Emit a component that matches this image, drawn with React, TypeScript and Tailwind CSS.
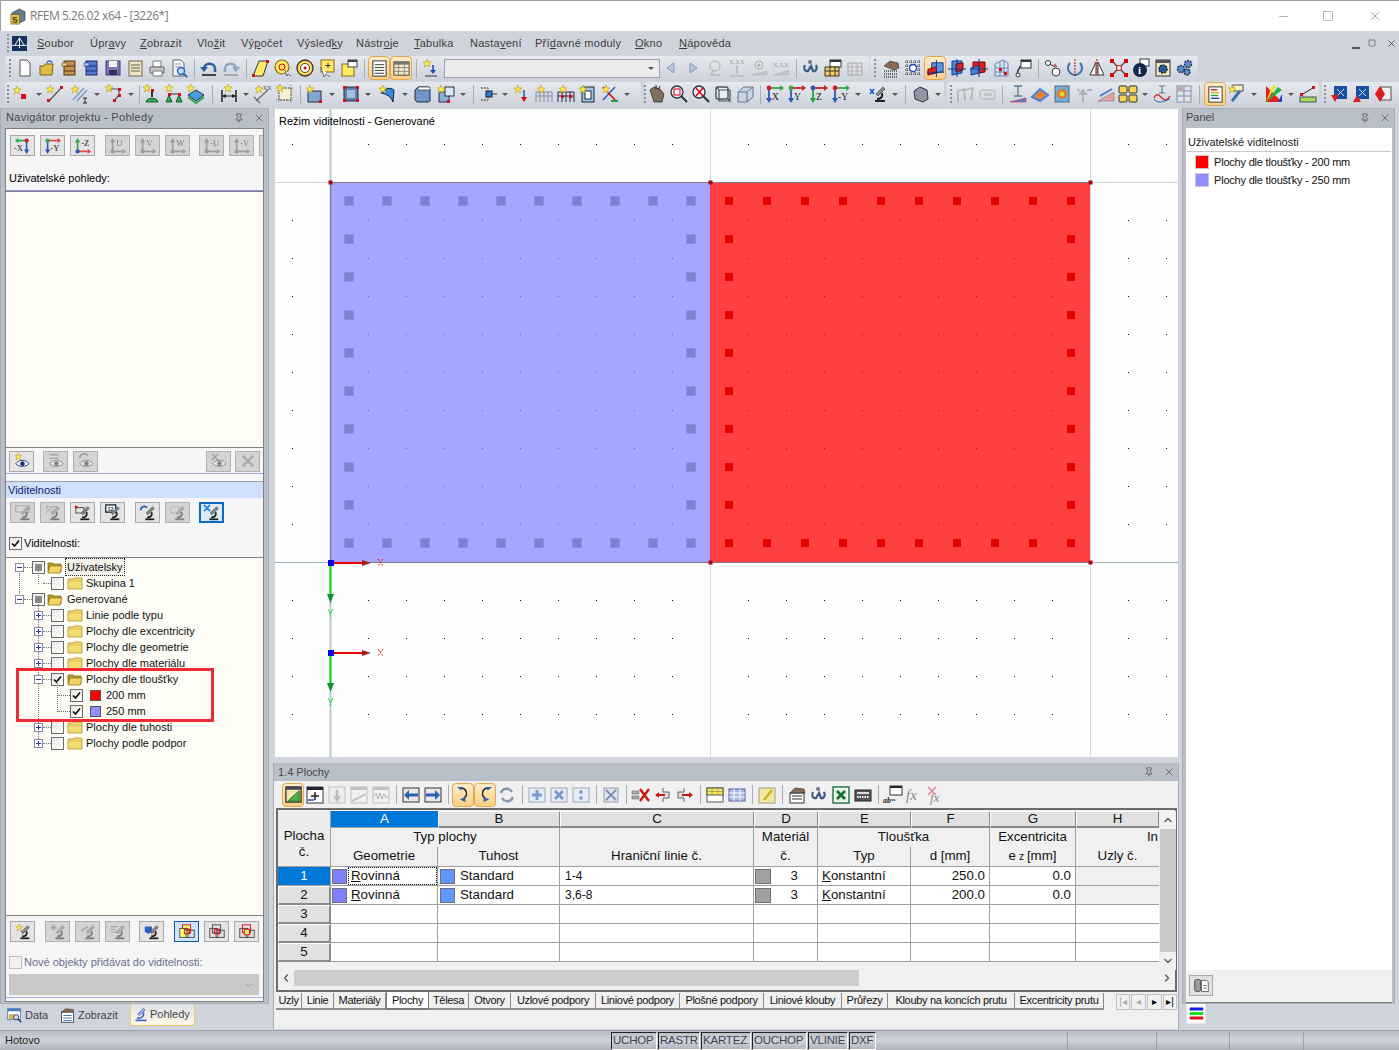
import type { ReactNode } from 'react';
import { ChevronDown, ChevronLeft, ChevronRight, ChevronUp, Minus, Pin, Square, X } from 'lucide-react';

const Nd = ({ x, y }: { x: number; y: number }) => <rect x={x} y={y} width="3" height="3" fill="#d4101c" />;
const Star = ({ x = 4, y = 4 }: { x?: number; y?: number }) => (
  <path transform={`translate(${x} ${y})`} d="M0-4 1-1.2 4-1 1.6.8 2.6 4 0 2.2-2.6 4-1.6.8-4-1-1-1.2z" fill="#ffe94a" stroke="#a8900f" strokeWidth=".5" />
);
const Scope = () => (
  <>
    <path d="M7 16h10v2H7z" fill="#222" />
    <path d="M9 15c4 0 6-2 5-6" fill="none" stroke="#222" strokeWidth="2" />
    <path d="M8 10l7-7 2 2-7 7z" fill="#8b8b8b" stroke="#333" strokeWidth=".6" />
  </>
);
const Eye = () => (
  <>
    <path d="M3 13c4-5 11-5 15 0-4 4-11 4-15 0z" fill="#fff" stroke="#23307c" />
    <circle cx="10.5" cy="13" r="2.6" fill="#23307c" />
  </>
);
// axis cross: h arrow along the top (or bottom), v arrow down (or up), dot at the corner
const AxesL = ({ label, h, v, dot }: { label: string; h: string; v: string; dot: string }) => (
  <>
    <path d="M14 4H3" stroke={h} strokeWidth="1.8" />
    <path d="M1 4l4-3v6z" fill={h} />
    <path d="M14 4v11" stroke={v} strokeWidth="1.8" />
    <path d="M14 19l-3-5h6z" fill={v} />
    <circle cx="14" cy="4" r="2.4" fill={dot} />
    <text x="0" y="16" fontSize="9.5" fontFamily="Liberation Serif" fill="#222">{label}</text>
  </>
);
const AxesR = ({ label, h, v, dot }: { label: string; h: string; v: string; dot: string }) => (
  <>
    <path d="M4 4h11" stroke={h} strokeWidth="1.8" />
    <path d="M19 4l-4-3v6z" fill={h} />
    <path d="M4 4v11" stroke={v} strokeWidth="1.8" />
    <path d="M4 19l-3-5h6z" fill={v} />
    <circle cx="4" cy="4" r="2.4" fill={dot} />
    <text x="7" y="16" fontSize="9.5" fontFamily="Liberation Serif" fill="#222">{label}</text>
  </>
);
const AxesU = ({ label, h, v, dot }: { label?: string; h: string; v: string; dot: string }) => (
  <>
    <path d="M4 16h11" stroke={h} strokeWidth="1.8" />
    <path d="M19 16l-4-3v6z" fill={h} />
    <path d="M4 16V5" stroke={v} strokeWidth="1.8" />
    <path d="M4 1L1 6h6z" fill={v} />
    <circle cx="4" cy="16" r="2.4" fill={dot} />
    {label && <text x="8" y="10" fontSize="9.5" fontFamily="Liberation Serif" fill="#222">{label}</text>}
  </>
);
const Layers = ({ fill, inner }: { fill: string; inner: string }) => (
  <>
    <rect x="5" y="2" width="9" height="9" fill={fill} stroke={inner} />
    <rect x="2" y="6" width="9" height="10" fill={fill === 'none' ? 'none' : '#ffff70'} stroke="#444" />
    <rect x="9" y="8" width="9" height="8" fill="none" stroke="#444" />
    <rect x="7" y="7" width="6" height="5" fill="none" stroke="#e00010" />
  </>
);

const I: Record<string, ReactNode> = {
  new: <path d="M5 2h7l3 3v13H5z" fill="#fff" stroke="#555" />,
  open: (
    <>
      <path d="M3 8h4l1-2h8l-1 11H3z" fill="#e2bb46" stroke="#7b6320" />
      <path d="M10 5c1-3 4-3 5 0" stroke="#2f6fd0" fill="none" strokeWidth="1.5" />
    </>
  ),
  cabO: (
    <>
      <rect x="5" y="3" width="11" height="14" fill="#c4914a" stroke="#4f361a" />
      <path d="M5 8h11M5 13h11" stroke="#4f361a" />
      <rect x="3" y="5" width="5" height="3" fill="#f0d090" stroke="#4f361a" strokeWidth=".5" />
    </>
  ),
  cabB: (
    <>
      <rect x="5" y="3" width="11" height="14" fill="#4f78cf" stroke="#1c2f70" />
      <path d="M5 8h11M5 13h11" stroke="#1c2f70" />
      <rect x="3" y="5" width="5" height="3" fill="#b0c8f0" stroke="#1c2f70" strokeWidth=".5" />
    </>
  ),
  save: (
    <>
      <rect x="3" y="3" width="14" height="14" fill="#7d78b4" stroke="#3b3870" />
      <rect x="6" y="3" width="8" height="6" fill="#f0f0f0" />
      <rect x="6" y="12" width="8" height="5" fill="#30305a" />
    </>
  ),
  memo: (
    <>
      <rect x="4" y="3" width="13" height="15" fill="#efe2c6" stroke="#6f6650" />
      <path d="M6 7h9M6 10h9M6 13h9" stroke="#6f6650" />
    </>
  ),
  print: (
    <>
      <path d="M6 3h8v6H6z" fill="#fff" stroke="#777" />
      <path d="M3 9h14v6H3z" fill="#c8c8c8" stroke="#666" />
      <path d="M6 13h9v5H6z" fill="#fff" stroke="#777" />
    </>
  ),
  prev: (
    <>
      <path d="M4 2h8l3 3v13H4z" fill="#f4f4f4" stroke="#666" />
      <path d="M6 6h6M6 9h6" stroke="#999" />
      <circle cx="12" cy="13" r="3.5" fill="#bcd8f8" stroke="#2a64b4" strokeWidth="1.4" />
      <path d="M15 16l3 3" stroke="#2a64b4" strokeWidth="2" />
    </>
  ),
  undo: (
    <>
      <path d="M5 11c0-7 11-7 11 0v3" fill="none" stroke="#2a5f9f" strokeWidth="2.5" />
      <path d="M1 9h8l-4 5z" fill="#2a5f9f" />
      <path d="M3 17h14" stroke="#111" strokeWidth="1.5" />
    </>
  ),
  redo: (
    <>
      <path d="M15 11c0-7-11-7-11 0v3" fill="none" stroke="#8fa5c0" strokeWidth="2.5" />
      <path d="M19 9h-8l4 5z" fill="#8fa5c0" />
      <path d="M3 17h14" stroke="#9a9a9a" strokeWidth="1.5" />
    </>
  ),
  para: (
    <>
      <path d="M8 3h9l-5 15H2z" fill="#ffe866" stroke="#333" />
      <Nd x={1} y={16} />
      <Nd x={15} y={2} />
    </>
  ),
  target: (
    <>
      <circle cx="9" cy="9" r="7" fill="#ffe866" stroke="#8a7010" strokeWidth="1.2" />
      <circle cx="9" cy="9" r="3" fill="none" stroke="#d00" />
      <path d="M12 12l2 6 1-2 3 2" fill="#fff" stroke="#444" strokeWidth=".8" />
    </>
  ),
  target2: (
    <>
      <circle cx="10" cy="10" r="8" fill="#ffd64a" stroke="#333" strokeWidth="1.3" />
      <circle cx="10" cy="10" r="4.5" fill="#fff" stroke="#444" />
      <circle cx="10" cy="10" r="1.5" fill="#d00" />
    </>
  ),
  noteCur: (
    <>
      <rect x="4" y="2" width="13" height="12" fill="#ffe866" stroke="#8a7010" />
      <path d="M11 5v5M8.500 7.500h5" stroke="#333" />
      <path d="M4 9l3 10 2-3 4 3" fill="#fff" stroke="#444" strokeWidth=".8" />
    </>
  ),
  win: (
    <>
      <rect x="3" y="6" width="12" height="12" fill="#ffe866" stroke="#8a7010" />
      <rect x="9" y="2" width="9" height="7" fill="#fff" stroke="#444" />
      <rect x="9" y="2" width="9" height="2" fill="#444" />
    </>
  ),
  list: (
    <>
      <rect x="3" y="2" width="14" height="16" fill="#fff" stroke="#333" />
      <path d="M5 6h10M5 9h10M5 12h10M5 15h10" stroke="#333" />
    </>
  ),
  table: (
    <>
      <rect x="2" y="3" width="16" height="14" fill="#f4e8c8" stroke="#444" />
      <rect x="2" y="3" width="16" height="3" fill="#777" />
      <path d="M2 9h16M2 13h16M7 6v11M13 6v11" stroke="#888" />
    </>
  ),
  starDown: (
    <>
      <Star x={6} y={5} />
      <path d="M12 7v8" stroke="#2050b0" strokeWidth="1.6" />
      <path d="M9 12h6l-3 4z" fill="#2050b0" />
      <path d="M4 18h12" stroke="#333" />
    </>
  ),
  left: <path d="M13 5v10l-7-5z" fill="#b8c8e4" stroke="#8898b8" />,
  right: <path d="M7 5v10l7-5z" fill="#b8c8e4" stroke="#8898b8" />,
  pin: (
    <>
      <circle cx="10" cy="8" r="5" fill="#dbe4f2" stroke="#6878a0" />
      <path d="M8 13l-2 4h9" fill="none" stroke="#6878a0" />
    </>
  ),
  xxDown: (
    <>
      <text x="2" y="6" fontSize="6.500" fill="#555" fontFamily="Liberation Serif">X.XX</text>
      <path d="M10 7v9" stroke="#7a8aa8" strokeWidth="1.500" />
      <path d="M3 18h14" stroke="#7a8aa8" />
    </>
  ),
  eyeP: (
    <>
      <circle cx="10" cy="7" r="4" fill="#dbe4f2" stroke="#6878a0" />
      <circle cx="10" cy="7" r="1.500" fill="#6878a0" />
      <path d="M2 17l16-4v4z" fill="#e9a0a0" stroke="#7a8aa8" strokeWidth=".5" />
    </>
  ),
  xxP: (
    <>
      <text x="2" y="9" fontSize="6.500" fill="#555" fontFamily="Liberation Serif">X.XX</text>
      <path d="M2 17l16-5v5z" fill="#e9a0a0" stroke="#7a8aa8" strokeWidth=".5" />
    </>
  ),
  loop: (
    <>
      <path d="M4 7c-2 3 0 7 3 6l3-5 2 5c2 1 5-2 3-6" fill="none" stroke="#3a5a80" strokeWidth="2.200" />
      <circle cx="9" cy="4" r="2" fill="#6a7a90" />
    </>
  ),
  gridWin: (
    <>
      <rect x="7" y="2" width="11" height="7" fill="#fff" stroke="#333" />
      <rect x="7" y="2" width="11" height="2" fill="#333" />
      <path d="M2 9h14v9H2z" fill="#f2cf68" stroke="#333" />
      <path d="M2 13h14M7 9v9M12 9v9" stroke="#333" />
    </>
  ),
  grid3: (
    <>
      <path d="M3 5h14v12H3z" fill="#e8e0c8" stroke="#777" />
      <path d="M3 9h14M3 13h14M7 5v12M12 5v12" stroke="#888" />
    </>
  ),
  handGrid: (
    <>
      <path d="M3 8l6-5 8 2 1 5-5 2z" fill="#8a6a50" stroke="#333" strokeWidth=".6" />
      <path d="M3 13h14M3 16h14M3 19h14" stroke="#444" strokeDasharray="1 1" strokeWidth="1.300" />
    </>
  ),
  blueGrid: (
    <>
      <path d="M2 4h16M2 8h16M2 12h16M2 16h16M4 2v16M8 2v16M12 2v16M16 2v16" stroke="#333" strokeDasharray="1 1" />
      <circle cx="10" cy="10" r="3.500" fill="#fff" stroke="#2040c0" strokeWidth="1.300" />
    </>
  ),
  surf: (
    <>
      <path d="M6 4h12v9l-12 3z" fill="#5a96e0" stroke="#123a90" />
      <path d="M2 11l9-3v6l-9 3z" fill="#e02020" stroke="#700" />
      <path d="M11 1v18" stroke="#123a90" />
      <path d="M1 14h18" stroke="#123a90" />
    </>
  ),
  surf2: (
    <>
      <path d="M5 3h10v12l-10 2z" fill="#4a86d8" stroke="#123a90" />
      <path d="M9 6l7-1v7l-7 2z" fill="#e02020" stroke="#700" />
      <path d="M10 1v18M1 11h18" stroke="#123a90" />
    </>
  ),
  surf3: (
    <>
      <path d="M4 4h12v10l-12 2z" fill="#e02020" stroke="#700" />
      <path d="M2 10l8-2v7l-8 2z" fill="#4a86d8" stroke="#123a90" />
      <path d="M10 1v18M1 11h18" stroke="#123a90" />
    </>
  ),
  build: (
    <>
      <path d="M4 18V6l8-4 5 3v13z" fill="#d8e4f4" stroke="#6a86b0" />
      <path d="M4 10h13M4 14h13M9 4v14M13 3v15" stroke="#6a86b0" />
      <Nd x={8} y={10} />
      <Nd x={13} y={14} />
    </>
  ),
  pathWin: (
    <>
      <path d="M5 17c-2-5 2-5 2-9" fill="none" stroke="#344" strokeWidth="1.600" />
      <circle cx="5" cy="17" r="2" fill="#fff" stroke="#333" />
      <rect x="8" y="2" width="10" height="8" fill="#fff" stroke="#333" />
      <rect x="8" y="2" width="10" height="2" fill="#333" />
    </>
  ),
  rings: (
    <>
      <circle cx="5" cy="5" r="2.500" fill="#fff" stroke="#333" />
      <circle cx="13" cy="14" r="4" fill="#fff" stroke="#333" />
      <path d="M7 6l5 3" stroke="#333" />
      <path d="M11 7h2v2" fill="none" stroke="#d00" />
    </>
  ),
  rotate: (
    <>
      <path d="M5 5a7 7 0 1 0 10 0" fill="none" stroke="#3a70b0" strokeWidth="2" />
      <path d="M10 1v18" stroke="#d00" strokeDasharray="2 1" />
    </>
  ),
  mirror: (
    <>
      <path d="M9 4v13H3zM11 4v13h6z" fill="#fff" stroke="#333" />
      <path d="M10 1v18" stroke="#d00" strokeDasharray="2 1" />
    </>
  ),
  redX: (
    <>
      <path d="M3 3l14 14M17 3L3 17" stroke="#444" strokeWidth="1.400" />
      <circle cx="10" cy="10" r="2.500" fill="#fff" stroke="#d00" />
      <rect x="1" y="1" width="4" height="4" fill="#d00" />
      <rect x="15" y="1" width="4" height="4" fill="#d00" />
      <rect x="1" y="15" width="4" height="4" fill="#d00" />
      <rect x="15" y="15" width="4" height="4" fill="#d00" />
    </>
  ),
  info: (
    <>
      <rect x="9" y="1" width="9" height="7" fill="#fff" stroke="#333" />
      <circle cx="9" cy="12" r="7" fill="#14264e" />
      <text x="7" y="16" fontSize="11" fontWeight="bold" fill="#fff" fontFamily="Liberation Serif">i</text>
    </>
  ),
  gearWin: (
    <>
      <rect x="3" y="2" width="14" height="16" fill="#f4e8c8" stroke="#333" />
      <rect x="3" y="2" width="14" height="3" fill="#555" />
      <circle cx="10" cy="11" r="4" fill="#2a5a9a" stroke="#222" strokeWidth="1.500" strokeDasharray="2 1" />
    </>
  ),
  gears: (
    <>
      <circle cx="6" cy="11" r="3.500" fill="#5a8ad0" stroke="#234" strokeWidth="1.400" strokeDasharray="2 1" />
      <circle cx="13" cy="6" r="3.500" fill="#5a8ad0" stroke="#234" strokeWidth="1.400" strokeDasharray="2 1" />
      <circle cx="12" cy="14" r="3" fill="#5a8ad0" stroke="#234" strokeWidth="1.400" strokeDasharray="2 1" />
    </>
  ),
  ptNew: (
    <>
      <Star x={5} y={6} />
      <rect x="9" y="10" width="5" height="5" fill="#d4101c" />
    </>
  ),
  line: (
    <>
      <path d="M4 17L16 4" stroke="#555" strokeWidth="1.300" />
      <Nd x={2} y={15} />
      <Nd x={15} y={2} />
      <Star x={5} y={5} />
    </>
  ),
  lines: (
    <>
      <path d="M3 16L14 4M7 17L17 6" stroke="#7e9cc8" strokeWidth="1.500" />
      <Star x={5} y={5} />
      <path d="M15 14v5M13 14h4M13 19h4" stroke="#223" />
    </>
  ),
  poly: (
    <>
      <path d="M5 5h10v6l-5 6" fill="none" stroke="#555" strokeWidth="1.200" />
      <Nd x={4} y={4} />
      <Nd x={14} y={4} />
      <Nd x={14} y={10} />
      <Nd x={9} y={15} />
      <Star x={5} y={4} />
    </>
  ),
  sup: (
    <>
      <Star x={5} y={4} />
      <path d="M10 7v6" stroke="#333" strokeWidth="2" />
      <path d="M4 18c0-5 12-5 12 0z" fill="#2fa84f" stroke="#14602a" />
      <Nd x={9} y={5} />
    </>
  ),
  sup2: (
    <>
      <Star x={5} y={4} />
      <path d="M5 10h10" stroke="#333" />
      <path d="M2 18l3-7 3 7zM12 18l3-7 3 7z" fill="#2fa84f" stroke="#14602a" />
      <Nd x={4} y={9} />
      <Nd x={14} y={9} />
    </>
  ),
  supS: (
    <>
      <path d="M2 11l8-5 8 5-8 6z" fill="#4a9ad8" stroke="#235" />
      <path d="M2 13l8 6 8-6" fill="none" stroke="#2fa84f" strokeWidth="2" />
      <Star x={5} y={4} />
    </>
  ),
  dim: (
    <>
      <path d="M3 6v12M17 6v12" stroke="#222" strokeWidth="1.500" />
      <path d="M3 12h14" stroke="#222" />
      <path d="M3 12l4-2v4zM17 12l-4-2v4z" fill="#222" />
      <Star x={9} y={4} />
    </>
  ),
  dimXX: (
    <>
      <path d="M3 17L15 6M1 13l6 6" stroke="#667" strokeWidth="1.200" />
      <Star x={6} y={5} />
      <text x="10" y="6" fontSize="6" fill="#444" fontFamily="Liberation Serif">XX</text>
    </>
  ),
  dash: (
    <>
      <rect x="4" y="4" width="12" height="12" fill="#f4f0d0" stroke="#333" strokeDasharray="1.500 1.500" />
      <path d="M1 4h18M1 16h18M4 1v18M16 1v18" stroke="#666" strokeDasharray="1 1" strokeWidth=".7" />
      <Star x={5} y={4} />
    </>
  ),
  boxS: (
    <>
      <rect x="3" y="7" width="13" height="11" fill="#7fa6d0" stroke="#234" />
      <Nd x={14} y={16} />
      <Star x={5} y={5} />
    </>
  ),
  boxR: (
    <>
      <rect x="3" y="3" width="14" height="14" fill="#5e80ac" stroke="#234" />
      <rect x="6" y="6" width="8" height="8" fill="#a8c0dc" />
      <Nd x={2} y={2} />
      <Nd x={15} y={2} />
      <Nd x={2} y={15} />
      <Nd x={15} y={15} />
    </>
  ),
  curve: (
    <>
      <path d="M3 9c4-5 9-6 13-3l-1 12C13 12 8 10 3 9z" fill="#3f8ae0" stroke="#123" />
      <Star x={5} y={5} />
    </>
  ),
  solid: (
    <>
      <path d="M3 6l3-3h10l2 3v11l-2 1H5l-2-2z" fill="#6f96c4" stroke="#234" />
      <path d="M6 3h12v3H6z" fill="#fff" stroke="#234" strokeWidth=".7" />
    </>
  ),
  boxes: (
    <>
      <rect x="3" y="8" width="10" height="10" fill="#8ab0d8" stroke="#234" />
      <rect x="9" y="3" width="9" height="9" fill="#dde8f4" stroke="#234" />
      <Nd x={11} y={16} />
      <Star x={5} y={5} />
    </>
  ),
  conn: (
    <>
      <path d="M3 4h7v4M3 16h7v-4" fill="none" stroke="#333" strokeDasharray="2 1" />
      <rect x="8" y="7" width="6" height="6" fill="#2a7ad0" stroke="#123" />
      <path d="M14 10h5" stroke="#333" />
    </>
  ),
  starRed: (
    <>
      <Star x={6} y={5} />
      <path d="M12 6v9" stroke="#2a5ac0" strokeWidth="1.600" />
      <path d="M9 13h6l-3 5z" fill="#d00" />
    </>
  ),
  gridG: (
    <>
      <path d="M2 18V8h16v10M2 12h16M6 8v10M10 8v10M14 8v10" fill="none" stroke="#8090a8" />
      <Star x={7} y={5} />
    </>
  ),
  gridB: (
    <>
      <path d="M2 18V8h16v10M2 12h16M6 8v10M10 8v10M14 8v10" fill="none" stroke="#224" />
      <Nd x={5} y={11} />
      <Nd x={13} y={11} />
      <Star x={7} y={5} />
    </>
  ),
  tower: (
    <>
      <rect x="4" y="3" width="12" height="15" fill="#9ac8e8" stroke="#223" />
      <rect x="7" y="7" width="6" height="8" fill="#fff" stroke="#223" />
      <Star x={5} y={5} />
    </>
  ),
  xGreen: (
    <>
      <path d="M3 16L15 3" stroke="#2060c0" strokeWidth="1.500" />
      <path d="M3 3l12 13" stroke="#d00" strokeWidth="1.500" />
      <path d="M11 17h7" stroke="#20a040" strokeWidth="2" />
      <Star x={6} y={5} />
    </>
  ),
  bug: (
    <>
      <path d="M3 6l4-3 6 2 4 5-2 8H7z" fill="#80705c" stroke="#222" strokeWidth=".7" />
      <path d="M9 1v4M13 2l-2 4" stroke="#222" />
    </>
  ),
  magR: (
    <>
      <circle cx="8" cy="8" r="6" fill="#eef" stroke="#234" strokeWidth="1.300" />
      <rect x="5" y="5" width="6" height="6" fill="none" stroke="#d00" />
      <path d="M12 12l6 6" stroke="#234" strokeWidth="2" />
    </>
  ),
  magX: (
    <>
      <circle cx="8" cy="8" r="6" fill="#eef" stroke="#234" strokeWidth="1.300" />
      <path d="M5 4l7 8M12 4l-7 8" stroke="#d00" strokeWidth="1.500" />
      <path d="M12 12l6 6" stroke="#234" strokeWidth="2" />
    </>
  ),
  wire: (
    <>
      <rect x="3" y="3" width="12" height="12" rx="2" fill="#e8eef4" stroke="#456" strokeWidth="1.400" />
      <path d="M3 3l3 3h11v11l-2-2M6 6v11h11" fill="none" stroke="#456" strokeWidth="1.200" />
    </>
  ),
  box3: (
    <>
      <path d="M3 8l6-5h9v10l-6 5H3z" fill="#c8d4e4" stroke="#678" />
      <path d="M3 8h9v10M12 8l6-5" fill="none" stroke="#678" />
    </>
  ),
  tbX: <AxesR label="X" h="#2fa84f" v="#2a5ac0" dot="#d02020" />,
  tbY: <AxesR label="Y" h="#d02020" v="#2a5ac0" dot="#2fa84f" />,
  tbZ: <AxesR label="Z" h="#d02020" v="#20a040" dot="#2a5ac0" />,
  tbMY: <AxesR label="-Y" h="#2fa84f" v="#2a5ac0" dot="#d02020" />,
  navX: <AxesL label="-X" h="#2fa84f" v="#2a5ac0" dot="#d02020" />,
  navY: <AxesR label="-Y" h="#e04040" v="#2a5ac0" dot="#2fa84f" />,
  navZ: <AxesU label="-Z" h="#e04040" v="#2fa84f" dot="#2a5ac0" />,
  uv: <AxesU label="U" h="#666" v="#666" dot="#666" />,
  uv2: <AxesU label="V" h="#666" v="#666" dot="#666" />,
  uv3: <AxesU label="W" h="#666" v="#666" dot="#666" />,
  uv4: <AxesU label="-U" h="#666" v="#666" dot="#666" />,
  uv5: <AxesU label="-V" h="#666" v="#666" dot="#666" />,
  uv0: <AxesU h="#666" v="#666" dot="#666" />,
  scopeB: (
    <>
      <Scope />
      <path d="M2 5l4 5M6 5l-4 5" stroke="#2060d0" strokeWidth="1.600" />
    </>
  ),
  view3: <path d="M3 7l6-4 7 3 1 9-5 3-8-3z" fill="#9098a4" stroke="#334" />,
  gCurve: <path d="M3 18V7l6-2 1 11M10 6l8-2-2 12" fill="none" stroke="#b07a70" strokeWidth="1.500" />,
  gTag: (
    <>
      <rect x="3" y="6" width="15" height="9" rx="2" fill="#ddd" stroke="#888" />
      <rect x="7" y="9" width="8" height="3" fill="#d4a0c0" />
    </>
  ),
  beam: (
    <>
      <path d="M10 2v10M6 2h8M6 12h8" stroke="#5a7a9a" strokeWidth="1.300" />
      <path d="M2 18l16-4v4z" fill="#4a86d8" stroke="#d02020" strokeWidth=".6" />
    </>
  ),
  rain: <path d="M2 13l8-8 8 6-8 6z" fill="#e88030" stroke="#4a86d8" strokeWidth="2" />,
  cubeR: (
    <>
      <rect x="3" y="2" width="14" height="16" fill="#70b0d8" stroke="#567" />
      <circle cx="10" cy="10" r="5" fill="#e07830" />
      <circle cx="10" cy="10" r="2.500" fill="#e8d030" />
    </>
  ),
  green: (
    <>
      <path d="M9 18V9M6 10l3-4 3 4zM13 6h5" stroke="#2fa84f" strokeWidth="1.800" fill="#2fa84f" />
      <path d="M3 5l3 2" stroke="#d06060" strokeWidth="1.500" />
    </>
  ),
  press: (
    <>
      <path d="M2 17l16-9v9z" fill="#e8a0a0" stroke="#789" strokeWidth=".7" />
      <path d="M4 12L16 5" stroke="#4a7ac8" strokeWidth="2" />
    </>
  ),
  four: (
    <>
      <rect x="1" y="2" width="8" height="7" rx="1" fill="#f4d458" stroke="#333" />
      <rect x="11" y="2" width="8" height="7" rx="1" fill="#f4d458" stroke="#333" />
      <rect x="1" y="11" width="8" height="7" rx="1" fill="#f4d458" stroke="#333" />
      <rect x="11" y="11" width="8" height="7" rx="1" fill="#f4d458" stroke="#333" />
    </>
  ),
  wave: (
    <>
      <path d="M10 2v7M7 2h6M7 9h6" stroke="#5a7a9a" strokeWidth="1.200" />
      <path d="M2 14c3-6 5-3 8 0s5 3 8-2" fill="none" stroke="#d02020" strokeWidth="1.300" />
      <path d="M2 15c4 5 8 3 16 0" fill="none" stroke="#3060c0" />
    </>
  ),
  grayT: (
    <>
      <rect x="3" y="2" width="14" height="16" fill="#e0e4ec" stroke="#8090a8" />
      <path d="M3 7h14M3 12h14M10 2v16" stroke="#8090a8" />
      <rect x="4" y="3" width="5" height="3" fill="#c8a0a0" />
    </>
  ),
  result: (
    <>
      <rect x="3" y="2" width="14" height="16" fill="#fff" stroke="#333" />
      <path d="M5 5h7" stroke="#d02020" strokeWidth="1.500" />
      <path d="M5 8h9" stroke="#e8a020" strokeWidth="1.500" />
      <path d="M5 11h8" stroke="#20a040" strokeWidth="1.500" />
      <path d="M5 14h9" stroke="#2050c0" strokeWidth="1.500" />
    </>
  ),
  brush: (
    <>
      <rect x="6" y="1" width="10" height="6" fill="#f8f0c0" stroke="#555" />
      <path d="M13 7L5 17" stroke="#3a70b0" strokeWidth="3" />
      <Star x={5} y={5} />
    </>
  ),
  diag: (
    <>
      <path d="M2 2v16h16z" fill="#e82020" />
      <path d="M2 18L14 3l4 3z" fill="#20b040" />
      <path d="M2 18L8 2h4z" fill="#f8e020" />
      <path d="M14 18l4-8v8z" fill="#2040d0" />
    </>
  ),
  ruler: (
    <>
      <rect x="2" y="13" width="16" height="5" fill="#a8d858" stroke="#456" />
      <path d="M3 11L15 4" stroke="#222" />
      <Nd x={2} y={9} />
      <Nd x={14} y={2} />
    </>
  ),
  blueA: (
    <>
      <rect x="5" y="2" width="13" height="13" fill="#1850a0" />
      <path d="M8 5l7 7M15 5l-7 7" stroke="#cfe0ff" />
      <path d="M2 11h8l-4 7z" fill="#d82020" />
    </>
  ),
  blueB: (
    <>
      <rect x="5" y="2" width="13" height="13" fill="#1850a0" />
      <path d="M8 5l7 7M15 5l-7 7" stroke="#cfe0ff" />
      <path d="M6 11l-4 7h8z" fill="#d82020" />
    </>
  ),
  redM: (
    <>
      <rect x="8" y="3" width="10" height="13" fill="#f0f0f0" stroke="#555" />
      <path d="M7 2l-5 8h10zM7 18l-5-8h10z" fill="#d82020" />
    </>
  ),
  tGreen: (
    <>
      <rect x="2" y="2" width="16" height="16" fill="#f0e8b0" stroke="#333" strokeWidth="1.400" />
      <rect x="2" y="2" width="16" height="3" fill="#445" />
      <path d="M16 6v11H4z" fill="#50b040" stroke="#2a6a20" />
    </>
  ),
  tAdd: (
    <>
      <rect x="2" y="2" width="16" height="16" fill="#fff" stroke="#333" />
      <rect x="2" y="2" width="16" height="3" fill="#223" />
      <path d="M10 7v8M6 11h8" stroke="#222" strokeWidth="1.500" />
      <path d="M3 15h6" stroke="#2050a0" strokeWidth="1.500" />
    </>
  ),
  tDown: (
    <>
      <rect x="2" y="2" width="16" height="16" fill="#e4ecf4" stroke="#8898b0" />
      <path d="M10 5v8" stroke="#6a8ab8" strokeWidth="2.500" />
      <path d="M6 11h8l-4 6z" fill="#6a8ab8" />
    </>
  ),
  tChart: (
    <>
      <rect x="2" y="2" width="16" height="16" fill="#f0f0f0" stroke="#8898b0" />
      <rect x="2" y="2" width="16" height="3" fill="#8898b0" />
      <path d="M3 16L17 9" stroke="#e07070" strokeWidth="1.500" />
    </>
  ),
  tWave: (
    <>
      <rect x="2" y="2" width="16" height="16" fill="#f0f0f0" stroke="#8898b0" />
      <rect x="2" y="2" width="16" height="3" fill="#8898b0" />
      <path d="M3 11l2-3 2 6 2-6 2 6 2-5 2 4 2-2" fill="none" stroke="#d86060" />
    </>
  ),
  tLeft: (
    <>
      <rect x="2" y="3" width="16" height="14" fill="#e8e8e8" stroke="#333" />
      <path d="M17 10H7" stroke="#2a60b0" strokeWidth="3" />
      <path d="M8 5v10l-5-5z" fill="#2a60b0" />
    </>
  ),
  tRight: (
    <>
      <rect x="2" y="3" width="16" height="14" fill="#e8e8e8" stroke="#333" />
      <path d="M3 10h10" stroke="#2a60b0" strokeWidth="3" />
      <path d="M12 5v10l5-5z" fill="#2a60b0" />
    </>
  ),
  curlA: (
    <>
      <path d="M6 3c6 0 8 4 7 8l-4 5" fill="none" stroke="#222" strokeWidth="1.600" />
      <path d="M3 2h5v4z" fill="#2a60b0" />
      <path d="M6 15l6 3v-5z" fill="#2a60b0" />
    </>
  ),
  curlB: (
    <>
      <path d="M14 3c-6 0-8 4-7 8l4 5" fill="none" stroke="#222" strokeWidth="1.600" />
      <path d="M17 2h-5v4z" fill="#2a60b0" />
      <path d="M14 15l-6 3v-5z" fill="#2a60b0" />
    </>
  ),
  cycle: <path d="M4 8a6 6 0 0 1 11-1M16 12a6 6 0 0 1-11 1" fill="none" stroke="#8898b0" strokeWidth="2.500" />,
  plus: (
    <>
      <rect x="2" y="3" width="16" height="14" fill="#e4ecf4" stroke="#a0a8b8" />
      <path d="M10 5v10M5 10h10" stroke="#7a9ad0" strokeWidth="3" />
    </>
  ),
  cross: (
    <>
      <rect x="2" y="3" width="16" height="14" fill="#e4ecf4" stroke="#a0a8b8" />
      <path d="M6 6l8 8M14 6l-8 8" stroke="#7a9ad0" strokeWidth="3" />
    </>
  ),
  dots: (
    <>
      <rect x="2" y="3" width="16" height="14" fill="#e4ecf4" stroke="#a0a8b8" />
      <circle cx="10" cy="7" r="1.800" fill="#7a9ad0" />
      <circle cx="10" cy="13" r="1.800" fill="#7a9ad0" />
    </>
  ),
  tX: (
    <>
      <rect x="3" y="3" width="14" height="14" fill="#dde4f0" stroke="#98a0b8" />
      <path d="M5 5l10 10M15 5L5 15" stroke="#8090b0" strokeWidth="2" />
    </>
  ),
  delRow: (
    <>
      <path d="M1 6h7v3H1zM1 11h7v3H1z" fill="#aaa" stroke="#555" strokeWidth=".5" />
      <path d="M9 4l9 12M18 4L9 16" stroke="#c81818" strokeWidth="2.400" />
    </>
  ),
  moveL: (
    <>
      <path d="M10 3v4h6v6h-6v4" fill="#ddd" stroke="#666" />
      <path d="M12 10H3" stroke="#c81818" strokeWidth="2" />
      <path d="M6 7l-4 3 4 3z" fill="#c81818" />
    </>
  ),
  moveR: (
    <>
      <path d="M9 3v4H3v6h6v4" fill="#ddd" stroke="#666" />
      <path d="M7 10h9" stroke="#c81818" strokeWidth="2" />
      <path d="M14 7l4 3-4 3z" fill="#c81818" />
    </>
  ),
  yTable: (
    <>
      <rect x="2" y="3" width="16" height="14" fill="#fff" stroke="#555" />
      <rect x="2" y="3" width="16" height="7" fill="#ffe850" stroke="#555" />
      <path d="M2 6.500h16M7 3v7M13 3v7" stroke="#777" strokeWidth=".6" />
    </>
  ),
  bTable: (
    <>
      <rect x="2" y="4" width="16" height="12" fill="#a8b8e8" stroke="#5060a0" />
      <path d="M2 8h16M2 12h16M7 4v12M13 4v12" stroke="#fff" />
    </>
  ),
  pencilT: (
    <>
      <rect x="2" y="3" width="16" height="15" fill="#f0e8a8" stroke="#a0a080" />
      <path d="M7 15l8-10" stroke="#d0b020" strokeWidth="2.500" />
    </>
  ),
  handT: (
    <>
      <rect x="3" y="8" width="14" height="10" fill="#fff" stroke="#333" />
      <path d="M5 11h10M5 14h10" stroke="#333" />
      <path d="M3 8l5-5 9 1 1 4z" fill="#8a6a50" stroke="#222" strokeWidth=".6" />
    </>
  ),
  xl: (
    <>
      <rect x="2" y="2" width="16" height="16" fill="#fff" stroke="#207a40" strokeWidth="1.500" />
      <rect x="4" y="4" width="12" height="12" fill="#e4f2e4" />
      <path d="M6 6l8 8M14 6l-8 8" stroke="#107030" strokeWidth="2.600" />
    </>
  ),
  calc: (
    <>
      <rect x="2" y="5" width="16" height="11" fill="#555" stroke="#222" />
      <rect x="4" y="7" width="12" height="2" fill="#ddd" />
      <path d="M4 12h12" stroke="#fff" strokeWidth="2" strokeDasharray="1.500 1" />
    </>
  ),
  abW: (
    <>
      <rect x="7" y="1" width="12" height="9" fill="#fff" stroke="#333" />
      <rect x="7" y="1" width="12" height="2" fill="#223" />
      <text x="0" y="18" fontSize="8" fontStyle="italic" fontWeight="bold" fontFamily="Liberation Serif" fill="#222">ab=</text>
    </>
  ),
  fx: <text x="1" y="15" fontSize="15" fontStyle="italic" fontFamily="Liberation Serif" fill="#8a8a8a">fx</text>,
  fxX: (
    <>
      <text x="3" y="17" fontSize="13" fontStyle="italic" fontFamily="Liberation Serif" fill="#8a8a8a">fx</text>
      <path d="M1 2l8 8M9 2l-8 8" stroke="#e08090" strokeWidth="1.500" />
    </>
  ),
  vwE: (
    <>
      <rect x="2" y="2" width="15" height="7" fill="none" stroke="#777" />
      <Scope />
    </>
  ),
  vwX: (
    <>
      <path d="M2 3h12v7" fill="none" stroke="#777" />
      <path d="M2 3l8 7M10 3l-8 7" stroke="#777" />
      <Scope />
    </>
  ),
  vwR: (
    <>
      <rect x="2" y="4" width="9" height="6" fill="none" stroke="#444" />
      <Nd x={1} y={2} />
      <Nd x={9} y={8} />
      <Scope />
    </>
  ),
  vwN: (
    <>
      <rect x="2" y="1" width="11" height="8" fill="#fff" stroke="#123" strokeWidth="1.400" />
      <text x="4" y="8" fontSize="6" fontWeight="bold" fill="#134">12</text>
      <Scope />
    </>
  ),
  vwC: (
    <>
      <path d="M2 7a4 4 0 0 1 7-3" fill="none" stroke="#2a60b0" strokeWidth="2" />
      <Scope />
    </>
  ),
  vwO: (
    <>
      <path d="M2 3h9v7H2z" fill="none" stroke="#999" />
      <Scope />
    </>
  ),
  vwB: (
    <>
      <path d="M1 1l7 7M8 1L1 8" stroke="#2a80e0" strokeWidth="1.800" />
      <Scope />
    </>
  ),
  vwNew: (
    <>
      <Star x={6} y={5} />
      <Scope />
    </>
  ),
  vwBl: (
    <>
      <path d="M2 4h8v6l-4 2-4-2z" fill="#2a60c8" />
      <Scope />
    </>
  ),
  vwG: (
    <>
      <path d="M2 5h6M5 2v6" stroke="#777" strokeWidth="2" />
      <Scope />
    </>
  ),
  vwL: (
    <>
      <path d="M2 9l8-5" stroke="#777" strokeWidth="1.500" />
      <Scope />
    </>
  ),
  vwM: (
    <>
      <path d="M2 4h8M2 7h6M2 10h6" stroke="#777" strokeWidth="1.200" />
      <Scope />
    </>
  ),
  eyeNew: (
    <>
      <Star x={6} y={5} />
      <Eye />
    </>
  ),
  eyeL: (
    <>
      <path d="M3 3h10M3 7h10" stroke="#777" strokeWidth="1.500" />
      <Eye />
    </>
  ),
  eyeC: (
    <>
      <path d="M3 7a5 5 0 0 1 9-3" fill="none" stroke="#777" strokeWidth="2" />
      <Eye />
    </>
  ),
  eyeX: (
    <>
      <path d="M2 2l7 7M9 2L2 9" stroke="#777" strokeWidth="1.800" />
      <Eye />
    </>
  ),
  bigX: <path d="M4 4l12 12M16 4L4 16" stroke="#888" strokeWidth="3" />,
  lyA: <Layers fill="#ffff70" inner="#e00010" />,
  lyB: <Layers fill="none" inner="#444" />,
  lyC: (
    <>
      <rect x="5" y="2" width="9" height="9" fill="none" stroke="#e00010" />
      <rect x="2" y="6" width="9" height="10" fill="none" stroke="#444" />
      <rect x="9" y="8" width="9" height="8" fill="none" stroke="#444" />
      <rect x="7" y="7" width="6" height="6" fill="#ffff70" stroke="#e00010" />
    </>
  ),
  clip: (
    <>
      <rect x="2" y="3" width="7" height="14" rx="2" fill="#999" stroke="#444" />
      <path d="M10 4h6l2 2v11h-8z" fill="#fff" stroke="#555" />
      <path d="M12 10h4M12 13h4" stroke="#555" />
    </>
  ),
  fData: (
    <>
      <rect x="2" y="2" width="15" height="13" fill="#fff" stroke="#4a78b8" />
      <rect x="2" y="2" width="15" height="3" fill="#4a78b8" />
      <path d="M4 9h5v5H4z" fill="#f0c040" stroke="#8a6a10" strokeWidth=".6" />
      <circle cx="12" cy="12" r="3" fill="#cfe0f8" stroke="#234" />
      <path d="M14 14l4 4" stroke="#234" strokeWidth="1.500" />
    </>
  ),
  fShow: (
    <>
      <rect x="3" y="6" width="14" height="12" fill="#fff" stroke="#345" />
      <path d="M5 10h10M5 13h10M5 16h10" stroke="#2a60b0" />
      <path d="M3 6l5-4 9 1v3z" fill="#8a6a50" stroke="#222" strokeWidth=".5" />
    </>
  ),
  fView: (
    <>
      <path d="M3 18h14" stroke="#3a60c0" strokeWidth="2" />
      <path d="M5 15c6 1 9-2 8-7" fill="none" stroke="#3a60c0" strokeWidth="2" />
      <path d="M6 10l7-7 2 2-7 7z" fill="#9ab8e8" stroke="#3a60c0" />
    </>
  ),
  bars: (
    <>
      <rect x="1" y="2" width="18" height="4" fill="#1020e0" />
      <rect x="1" y="8" width="18" height="4" fill="#10e020" />
      <rect x="1" y="14" width="18" height="4" fill="#e01020" />
    </>
  ),
};

const Ico = ({ k, d, size = 20 }: { k: string; d?: boolean; size?: number }) => (
  <svg viewBox="0 0 20 20" width={size} height={size} className={d ? 'opacity-50 grayscale' : ''}>
    {I[k]}
  </svg>
);

// toolbar button
const T = ({ k, d, a }: { k: string; d?: boolean; a?: boolean }) => (
  <span className={`w-[22px] h-[24px] shrink-0 flex items-center justify-center rounded-sm ${a ? 'border border-[#e2a850] bg-gradient-to-b from-[#fdeccb] to-[#fbcf85]' : ''}`}>
    <Ico k={k} d={d} size={a ? 19 : 20} />
  </span>
);
const Arr = () => (
  <span className="w-[12px] h-[24px] shrink-0 flex items-center justify-center">
    <span className="w-0 h-0 border-x-[3px] border-x-transparent border-t-[3px] border-t-[#555]" />
  </span>
);
const Sep = ({ w = 'w-[8px]' }: { w?: string }) => (
  <span className={`${w} shrink-0 flex justify-center`}>
    <span className="w-px h-[19px] bg-[#a8adb8]" />
  </span>
);
const Grip = ({ w = 'w-[9px]' }: { w?: string }) => (
  <span className={`${w} shrink-0 flex justify-center`}>
    <span className="h-[18px] border-l-2 border-dotted border-[#8a8f9a]" />
  </span>
);
const Band = ({ w, children }: { w: string; children: ReactNode }) => (
  <div className={`${w} h-[25px] shrink-0 flex items-center rounded-[3px] bg-gradient-to-b from-[#e6e9ef] to-[#cdd1da]`}>{children}</div>
);

// square button used in the navigator
const B = ({ k, d, sel, w = 'w-[25px]', dark }: { k: string; d?: boolean; sel?: 'blue' | 'soft'; w?: string; dark?: boolean }) => (
  <span
    className={`${w} h-[21px] shrink-0 flex items-center justify-center border ${
      sel === 'blue'
        ? 'border-[#0a6ac8] border-2 bg-[#dcecfb]'
        : sel === 'soft'
          ? 'border-[#0a5aa8] bg-[#cfe4f8]'
          : dark
            ? 'border-[#b0b0b0] bg-[#d4d4d4]'
            : 'border-[#a8a8a8] bg-[#e4e4e4]'
    }`}
  >
    <Ico k={k} d={d} size={18} />
  </span>
);

const U = ({ t, i }: { t: string; i: number }) => (
  <>
    {t.slice(0, i)}
    <span className="underline">{t[i]}</span>
    {t.slice(i + 1)}
  </>
);

const Check = ({ on, mixed, d }: { on?: boolean; mixed?: boolean; d?: boolean }) => (
  <span className={`w-[13px] h-[13px] shrink-0 border flex items-center justify-center ${d ? 'border-[#c0c0c0] bg-[#f0f0f0]' : 'border-[#6c6c6c] bg-gradient-to-br from-[#e8e8e8] to-[#fff]'}`}>
    {on && (
      <svg viewBox="0 0 11 11" width="11" height="11">
        <path d="M2 5.500 4.500 8 9 2.500" fill="none" stroke="#111" strokeWidth="1.700" />
      </svg>
    )}
    {mixed && <span className="w-[7px] h-[7px] bg-[#8a8a8a]" />}
  </span>
);

const Folder = ({ open }: { open?: boolean }) => (
  <svg viewBox="0 0 16 14" width="16" height="14" className="shrink-0">
    {open ? (
      <>
        <path d="M1 3h5l1 1h7v8H1z" fill="#b89a2c" stroke="#7a6518" strokeWidth=".7" />
        <path d="M3 6h12l-2 7H1z" fill="#f0d560" stroke="#8a7418" strokeWidth=".7" />
      </>
    ) : (
      <>
        <path d="M1 3h5l1-1h8v11H1z" fill="#f4dc70" stroke="#a08a28" strokeWidth=".7" />
        <path d="M1 5h14" stroke="#c8b040" strokeWidth=".7" />
      </>
    )}
  </svg>
);

const Exp = ({ open }: { open?: boolean }) => (
  <span className="w-[9px] h-[9px] shrink-0 border border-[#7f8a9c] bg-white relative">
    <span className="absolute left-[1px] right-[1px] top-[3px] h-px bg-[#2b3a8c]" />
    {!open && <span className="absolute top-[1px] bottom-[1px] left-[3px] w-px bg-[#2b3a8c]" />}
  </span>
);

const Row0 = ({ label, sel }: { label: string; sel?: boolean }) => (
  <div className="h-[16px] flex items-center pl-[15px]">
    <Exp open />
    <span className="w-[8px] border-t border-dotted border-[#777]" />
    <Check mixed />
    <span className="ml-[2px]">
      <Folder open />
    </span>
    <span className={`ml-[3px] px-[1px] ${sel ? 'outline outline-1 outline-dotted outline-[#222] bg-[#f3f3ea]' : ''}`}>{label}</span>
  </div>
);
const Row1 = ({ label, exp = true, on, open }: { label: string; exp?: boolean; on?: boolean; open?: boolean }) => (
  <div className="h-[16px] flex items-center pl-[34px]">
    {exp ? <Exp open={open} /> : <span className="w-[9px]" />}
    <span className="w-[8px] border-t border-dotted border-[#777]" />
    <Check on={on} />
    <span className="ml-[3px]">
      <Folder open={open} />
    </span>
    <span className="ml-[3px]">{label}</span>
  </div>
);
const Row2 = ({ label, color }: { label: string; color: string }) => (
  <div className="h-[16px] flex items-center pl-[58px]">
    <span className="w-[12px] border-t border-dotted border-[#777]" />
    <Check on />
    <span className={`ml-[7px] w-[11px] h-[11px] border border-[#555] ${color}`} />
    <span className="ml-[5px]">{label}</span>
  </div>
);

const range = (a: number, b: number, s: number) => {
  const r: number[] = [];
  for (let v = a; v <= b; v += s) r.push(v);
  return r;
};

const Canvas = () => {
  const perim = (x0: number) => {
    const xs = range(x0, x0 + 342, 38);
    const ys = range(201, 543, 38);
    const pts: [number, number][] = [];
    xs.forEach((x) => {
      pts.push([x, 201], [x, 543]);
    });
    ys.slice(1, -1).forEach((y) => {
      pts.push([x0, y], [x0 + 342, y]);
    });
    return pts;
  };
  return (
    <svg viewBox="275 109 903 648" width="903" height="648" className="block">
      <rect x="275" y="109" width="903" height="648" fill="#fdfdfd" />
      {range(292, 1170, 38).map((x) =>
        range(144, 750, 38).map((y) => <rect key={`${x}-${y}`} x={x} y={y} width="1" height="1" fill="#111" />),
      )}
      <path d="M330.500 109v648" stroke="#b9cccf" strokeWidth="2" />
      <path d="M710.500 109v648M1090.500 109v648" stroke="#d4d8d8" />
      <path d="M275 182.500h903" stroke="#d4d8d8" />
      <path d="M275 562.500h903" stroke="#9db4b6" />
      <rect x="330" y="182" width="380" height="380" fill="#8080ff" fillOpacity=".7" />
      <rect x="710" y="182" width="380" height="380" fill="#ff0000" fillOpacity=".75" />
      <path d="M330.500 562V182.500H1090M330 562.500h760" fill="none" stroke="#7a7a8a" />
      {perim(349).map(([x, y]) => (
        <g key={`b${x}-${y}`}>
          <rect x={x - 5} y={y - 5} width="10" height="10" fill="#8e8ee8" />
          <rect x={x - 4} y={y - 4} width="8" height="8" fill="#8080d0" />
        </g>
      ))}
      {perim(729).map(([x, y]) => (
        <rect key={`r${x}-${y}`} x={x - 4} y={y - 4} width="8" height="8" fill="#e60000" />
      ))}
      {[
        [330, 182],
        [710, 182],
        [1090, 182],
        [710, 562],
        [1090, 562],
      ].map(([x, y]) => (
        <rect key={`n${x}`} x={x - 1.500} y={y - 1.500} width="4" height="4" fill="#a80a10" />
      ))}
      {[
        [562, 613],
        [652, 702],
      ].map(([y, ly]) => (
        <g key={y}>
          <path d={`M330 ${y + 1}h34`} stroke="#f00000" strokeWidth="2" />
          <path d={`M362 ${y - 2}l9 3-9 3z`} fill="#a02020" />
          <path d={`M330.500 ${y + 1}v${ly - y - 16}`} stroke="#00e000" strokeWidth="2" />
          <path d={`M327 ${ly - 19}h7l-3.500 9z`} fill="#109030" />
          <rect x="328" y={y - 2} width="6" height="6" fill="#0000f0" />
          <path d={`M378 ${y - 3}l5 7M383 ${y - 3}l-5 7`} stroke="#f01010" strokeDasharray="2 1" />
          <path d={`M328 ${ly - 4}l2.500 4 2.500-4M330.500 ${ly}v4`} fill="none" stroke="#20e040" />
        </g>
      ))}
    </svg>
  );
};

const head = 'border-r border-b border-[#a0a0a0] bg-[#f0f0f0] flex items-center justify-center pb-[2px]';
const cell = 'border-r border-b border-[#a0a0a0] bg-white flex items-center';
const letter = 'border-r border-b-2 border-r-[#8a8a8a] border-b-[#8a8a8a] border-t border-l border-t-white border-l-white bg-[#e1e1e1] flex items-center justify-center';
const sub = 'border-r border-[#a0a0a0] bg-[#f0f0f0] flex items-center justify-center pb-[2px]';

const Swatch = ({ c, w = 'w-[15px]' }: { c: string; w?: string }) => <span className={`${w} h-[15px] shrink-0 border border-[#707070] ${c}`} />;

const RowHead = ({ n, a }: { n: number; a?: boolean }) => (
  <div className={a ? 'bg-[#0078d7] text-white flex items-center justify-center border-b border-r border-[#a0a0a0]' : 'bg-[#e1e1e1] border-t border-l border-t-white border-l-white border-r-2 border-b-2 border-r-[#8a8a8a] border-b-[#8a8a8a] flex items-center justify-center'}>{n}</div>
);

const DataRow = ({ n, a, lines, d, ez }: { n: number; a?: boolean; lines: string; d: string; ez: string }) => (
  <>
    <RowHead n={n} a={a} />
    <div className={`${cell} pl-[1px]`}>
      <Swatch c="bg-[#8080ff]" />
      <span className={`ml-[1px] flex-1 h-full flex items-center pl-[3px] ${a ? 'outline outline-1 outline-dotted outline-[#111] -outline-offset-1' : ''}`}>
        <span>
          <U t="Rovinná" i={0} />
        </span>
      </span>
    </div>
    <div className={`${cell} pl-[2px]`}>
      <Swatch c="bg-[#5f96ff]" />
      <span className="ml-[5px]">Standard</span>
    </div>
    <div className={`${cell} pl-[5px] text-[12px]`}>{lines}</div>
    <div className={`${cell} pl-[1px]`}>
      <Swatch c="bg-[#a0a0a0]" w="w-[16px]" />
      <span className="flex-1 text-right pr-[19px]">3</span>
    </div>
    <div className={`${cell} pl-[4px]`}>
      <span>
        <U t="Konstantní" i={0} />
      </span>
    </div>
    <div className={`${cell} justify-end pr-[4px]`}>{d}</div>
    <div className={`${cell} justify-end pr-[4px]`}>{ez}</div>
    <div className="border-b border-[#a0a0a0] bg-[#f0f0f0]" />
  </>
);

const EmptyRow = ({ n }: { n: number }) => (
  <>
    <RowHead n={n} />
    {['a', 'b', 'c', 'd', 'e', 'f', 'g'].map((c) => (
      <div key={c} className={cell} />
    ))}
    <div className="border-b border-[#a0a0a0] bg-white" />
  </>
);

const sheets: [string, string][] = [
  ['Uzly', 'w-[26px]'],
  ['Linie', 'w-[32px]'],
  ['Materiály', 'w-[52px]'],
  ['Plochy', 'w-[43px]'],
  ['Tělesa', 'w-[40px]'],
  ['Otvory', 'w-[42px]'],
  ['Uzlové podpory', 'w-[85px]'],
  ['Liniové podpory', 'w-[84px]'],
  ['Plošné podpory', 'w-[84px]'],
  ['Liniové klouby', 'w-[78px]'],
  ['Průřezy', 'w-[46px]'],
  ['Klouby na koncích prutu', 'w-[127px]'],
  ['Excentricity prutu', 'w-[89px]'],
];

const menu: [string, number, string][] = [
  ['Soubor', 0, 'w-[53px]'],
  ['Úpravy', 3, 'w-[50px]'],
  ['Zobrazit', 0, 'w-[57px]'],
  ['Vložit', 3, 'w-[44px]'],
  ['Výpočet', 2, 'w-[56px]'],
  ['Výsledky', 6, 'w-[59px]'],
  ['Nástroje', 5, 'w-[58px]'],
  ['Tabulka', 0, 'w-[56px]'],
  ['Nastavení', 5, 'w-[65px]'],
  ['Přídavné moduly', 3, 'w-[100px]'],
  ['Okno', 0, 'w-[44px]'],
  ['Nápověda', 0, 'w-[60px]'],
];

const tree0 = ['Linie podle typu', 'Plochy dle excentricity', 'Plochy dle geometrie', 'Plochy dle materiálu'];

export default function App() {
  return (
    <div className="w-[1399px] h-[1050px] overflow-hidden bg-[#cfd3dc] text-[11px] text-[#111] font-['Liberation_Sans',Arial,sans-serif] flex flex-col">
      {/* title bar */}
      <div className="h-[31px] shrink-0 bg-white border-t border-l border-[#a0a0a0] flex items-center pl-[8px]">
        <svg viewBox="0 0 18 18" width="17" height="17">
          <path d="M3 5l8-4 6 3v9l-8 4-6-3z" fill="#6a7a90" stroke="#333" strokeWidth=".6" />
          <rect x="2" y="7" width="9" height="10" fill="#e0c040" stroke="#6a5a10" strokeWidth=".6" />
          <text x="3.500" y="16" fontSize="10" fontWeight="bold" fill="#4a3a10">5</text>
        </svg>
        <span className="ml-[4px] text-[12px] text-[#7a7a7a] font-['Open_Sans',sans-serif] tracking-[-0.45px]">RFEM 5.26.02 x64 - [3226*]</span>
        <span className="flex-1" />
        <Minus size={13} strokeWidth={1} className="text-[#666] mr-[32px]" />
        <Square size={12} strokeWidth={1} className="text-[#666] mr-[34px]" />
        <X size={14} strokeWidth={1} className="text-[#666] mr-[17px]" />
      </div>

      {/* menu */}
      <div className="h-[24px] shrink-0 flex items-center pl-[5px] text-[#3c3c3c]">
        <Grip w="w-[5px]" />
        <svg viewBox="0 0 16 16" width="17" height="15" className="ml-[1px]">
          <rect width="16" height="16" fill="#14305c" />
          <path d="M0 10h16M8 2v11M3 10l5-8 5 8" stroke="#fff" fill="none" />
        </svg>
        <span className="w-[9px]" />
        {menu.map(([t, i, w]) => (
          <span key={t} className={`${w} shrink-0 tracking-[0.25px]`}>
            <U t={t} i={i} />
          </span>
        ))}
        <span className="flex-1" />
        <span className="w-[8px] h-[2px] bg-[#555] self-end mb-[6px] mr-[8px]" />
        <Square size={8} className="text-[#555] mr-[10px]" />
        <X size={11} strokeWidth={2} className="text-[#555] mr-[2px]" />
      </div>

      {/* toolbar 1 */}
      <div className="h-[26px] shrink-0 flex items-center pl-[5px]">
        <Band w="w-[864px]">
          <Grip />
          {['new', 'open', 'cabO', 'cabB', 'save', 'memo', 'print', 'prev'].map((k) => (
            <T key={k} k={k} />
          ))}
          <Sep />
          <T k="undo" />
          <T k="redo" />
          <Sep />
          {['para', 'target', 'target2', 'noteCur', 'win'].map((k) => (
            <T key={k} k={k} />
          ))}
          <Sep />
          <T k="list" a />
          <T k="table" a />
          <Sep />
          <T k="starDown" />
          <span className="ml-[2px] w-[216px] h-[19px] shrink-0 border border-[#a0a4ac] bg-[#ececec] flex items-center justify-end pr-[5px]">
            <span className="w-0 h-0 border-x-[3px] border-x-transparent border-t-[3px] border-t-[#555]" />
          </span>
          <T k="left" />
          <T k="right" />
          {['pin', 'xxDown', 'eyeP', 'xxP'].map((k) => (
            <T key={k} k={k} d />
          ))}
          <Sep />
          <T k="loop" />
          <T k="gridWin" />
          <T k="grid3" d />
        </Band>
        <span className="w-[1px]" />
        <Band w="w-[328px]">
          <Grip w="w-[10px]" />
          <T k="handGrid" />
          <T k="blueGrid" />
          <T k="surf" a />
          <T k="surf2" />
          <T k="surf3" />
          <T k="build" />
          <T k="pathWin" />
          <Sep />
          {['rings', 'rotate', 'mirror', 'redX', 'info', 'gearWin', 'gears'].map((k) => (
            <T key={k} k={k} />
          ))}
        </Band>
      </div>

      {/* toolbar 2 */}
      <div className="h-[26px] shrink-0 flex items-center pl-[5px] gap-[3px]">
        <Band w="w-[636px]">
          <Grip w="w-[6px]" />
          <T k="ptNew" />
          <Arr />
          <span className="-ml-[1px]"><T k="line" /></span>
          <span className="ml-[3px]"><T k="lines" /></span>
          <Arr />
          <T k="poly" />
          <Arr />
          <Sep w="w-[4px]" />
          <T k="sup" />
          <T k="sup2" />
          <T k="supS" />
          <Sep w="w-[11px]" />
          <T k="dim" />
          <Arr />
          <T k="dimXX" />
          <T k="dash" />
          <Sep />
          <T k="boxS" />
          <Arr />
          <span className="ml-[2px]"><T k="boxR" /></span>
          <Arr />
          <span className="ml-[3px]"><T k="curve" /></span>
          <Arr />
          <T k="solid" />
          <span className="ml-[2px]"><T k="boxes" /></span>
          <Arr />
          <Sep />
          <T k="conn" />
          <Arr />
          <T k="starRed" />
          <T k="gridG" />
          <T k="gridB" />
          <T k="tower" />
          <T k="xGreen" />
          <Arr />
        </Band>
        <Band w="w-[300px]">
          <Grip w="w-[2px]" />
          {['bug', 'magR', 'magX', 'wire', 'box3'].map((k) => (
            <T key={k} k={k} />
          ))}
          <Sep />
          <T k="tbX" />
          <T k="tbY" />
          <T k="tbZ" />
          <T k="tbMY" />
          <Arr />
          <span className="ml-[3px]"><T k="scopeB" /></span>
          <Arr />
          <Sep w="w-[9px]" />
          <T k="view3" />
          <Arr />
        </Band>
        <Band w="w-[372px]">
          <Grip w="w-[7px]" />
          <T k="gCurve" d />
          <T k="gTag" d />
          <Sep w="w-[9px]" />
          {['beam', 'rain', 'cubeR', 'green', 'press', 'four'].map((k) => (
            <T key={k} k={k} d={k === 'green'} />
          ))}
          <Arr />
          <T k="wave" />
          <T k="grayT" />
          <Sep w="w-[9px]" />
          <T k="result" a />
          <T k="brush" />
          <Arr />
          <span className="ml-[3px]"><T k="diag" /></span>
          <Arr />
          <T k="ruler" />
        </Band>
        <Band w="w-[78px]">
          <Grip w="w-[6px]" />
          <T k="blueA" />
          <T k="blueB" />
          <T k="redM" />
        </Band>
      </div>

      {/* main */}
      <div className="h-[923px] shrink-0 flex">
        {/* navigator */}
        <div className="w-[273px] shrink-0 flex flex-col">
          <div className="w-[269px] h-[896px] mt-[1px] border border-[#a8acb4] bg-[#b9bfc9] flex flex-col">
            <div className="h-[19px] shrink-0 flex items-center pl-[5px] pb-[2px] text-[#44484f] tracking-[0.3px]">
              Navigátor projektu - Pohledy
              <span className="flex-1" />
              <Pin size={10} className="text-[#555] mr-[9px]" />
              <X size={12} strokeWidth={1.500} className="text-[#555] mr-[3px]" />
            </div>
            <div className="flex-1 mx-[4px] mb-[1px] border border-[#808080] bg-[#f6f6f6] flex flex-col overflow-hidden">
              <div className="h-[27px] shrink-0 flex items-end pl-[4px] overflow-hidden">
                <B k="navX" />
                <span className="w-[5px] shrink-0" />
                <B k="navY" />
                <span className="w-[5px] shrink-0" />
                <B k="navZ" />
                <span className="w-[10px] shrink-0" />
                <B k="uv" dark d />
                <span className="w-[5px] shrink-0" />
                <B k="uv2" dark d />
                <span className="w-[5px] shrink-0" />
                <B k="uv3" dark d />
                <span className="w-[9px] shrink-0" />
                <B k="uv4" dark d />
                <span className="w-[5px] shrink-0" />
                <B k="uv5" dark d />
                <span className="w-[5px] shrink-0" />
                <B k="uv0" dark d />
              </div>
              <div className="h-[35px] shrink-0 flex items-center pl-[3px] pt-[11px] border-b border-[#9898d8] text-black">Uživatelské pohledy:</div>
              <div className="h-[257px] shrink-0 bg-[#fdfdf5] border-y border-[#808080]" />
              <div className="h-[26px] shrink-0 flex items-center pl-[3px] pt-[1px] border-b border-[#a8a8e0]">
                <B k="eyeNew" />
                <span className="w-[9px] shrink-0" />
                <B k="eyeL" dark d />
                <span className="w-[5px] shrink-0" />
                <B k="eyeC" dark d />
                <span className="w-[108px] shrink-0" />
                <B k="eyeX" dark d />
                <span className="w-[4px] shrink-0" />
                <B k="bigX" dark d />
              </div>
              <div className="h-[8px] shrink-0 border-b border-[#a0a0a0]" />
              <div className="h-[16px] shrink-0 bg-[#cfe0fb] text-[#16166e] flex items-center pl-[2px]">Viditelnosti</div>
              <div className="h-[25px] shrink-0 flex items-end pl-[4px]">
                <B k="vwE" dark d />
                <span className="w-[5px] shrink-0" />
                <B k="vwX" dark d />
                <span className="w-[5px] shrink-0" />
                <B k="vwR" />
                <span className="w-[5px] shrink-0" />
                <B k="vwN" />
                <span className="w-[10px] shrink-0" />
                <B k="vwC" />
                <span className="w-[5px] shrink-0" />
                <B k="vwO" dark d />
                <span className="w-[9px] shrink-0" />
                <B k="vwB" sel="blue" />
              </div>
              <div className="h-[34px] shrink-0 flex items-center pl-[3px] pt-[7px] text-black">
                <Check on />
                <span className="ml-[2px]">Viditelnosti:</span>
              </div>
              <div className="h-[359px] shrink-0 relative bg-[#fdfdf5] border-y border-[#808080] pt-[1px] text-[#111]">
                <div className="absolute left-[13px] top-[9px] h-[33px] border-l border-dotted border-[#777]" />
                <div className="absolute left-[32px] top-[9px] h-[17px] border-l border-dotted border-[#777]" />
                <div className="absolute left-[32px] top-[41px] h-[144px] border-l border-dotted border-[#777]" />
                <div className="absolute left-[51px] top-[121px] h-[33px] border-l border-dotted border-[#777]" />
                <div className="-ml-[6px]">
                  <Row0 label="Uživatelsky" sel />
                  <Row1 label="Skupina 1" exp={false} />
                  <Row0 label="Generované" />
                  {tree0.map((l) => (
                    <Row1 key={l} label={l} />
                  ))}
                  <Row1 label="Plochy dle tloušťky" on open />
                  <Row2 label="200 mm" color="bg-[#ff0000]" />
                  <Row2 label="250 mm" color="bg-[#8f8fff]" />
                  <Row1 label="Plochy dle tuhosti" />
                  <Row1 label="Plochy podle podpor" />
                </div>
                <div className="absolute left-[10px] top-[110px] w-[198px] h-[54px] border-[3px] border-[#ee2a35]" />
              </div>
              <div className="h-[26px] shrink-0 flex items-end pl-[4px]">
                <B k="vwNew" />
                <span className="w-[10px] shrink-0" />
                <B k="vwG" dark d />
                <span className="w-[5px] shrink-0" />
                <B k="vwL" dark d />
                <span className="w-[5px] shrink-0" />
                <B k="vwM" dark d />
                <span className="w-[9px] shrink-0" />
                <B k="vwBl" />
                <span className="w-[10px] shrink-0" />
                <B k="lyA" sel="soft" />
                <span className="w-[5px] shrink-0" />
                <B k="lyB" />
                <span className="w-[5px] shrink-0" />
                <B k="lyC" />
              </div>
              <div className="h-[31px] shrink-0 flex items-center pl-[3px] pt-[10px] text-[#6a7090]">
                <Check d />
                <span className="ml-[2px]">Nové objekty přidávat do viditelnosti:</span>
              </div>
              <div className="ml-[3px] mt-[1px] w-[250px] h-[21px] shrink-0 bg-[#c8c8c8] flex items-center justify-end pr-[4px]">
                <ChevronDown size={12} className="text-[#9a9a9a]" />
              </div>
              <div className="mt-[2px] border-b border-[#a8a8e0]" />
            </div>
          </div>
          <div className="h-[22px] flex items-center pl-[6px] pt-[1px] text-[#3c4450]">
            <Ico k="fData" size={17} />
            <span className="ml-[2px] w-[34px]">Data</span>
            <Ico k="fShow" size={17} />
            <span className="ml-[2px] w-[52px]">Zobrazit</span>
            <span className="h-[22px] -mt-[2px] px-[2px] flex items-center border border-t-0 border-[#f0c870] rounded-b-[3px] bg-gradient-to-b from-[#dfe2e8] to-[#fff8e4]">
              <Ico k="fView" size={16} />
              <span className="ml-[1px] pr-[2px]">Pohledy</span>
            </span>
          </div>
        </div>

        {/* center */}
        <div className="w-[906px] shrink-0 flex flex-col">
          <div className="pt-[2px] pl-[2px]">
            <div className="relative w-[903px] h-[648px]">
              <Canvas />
              <span className="absolute left-[4px] top-[4px] text-black">Režim viditelnosti - Generované</span>
            </div>
          </div>
          <div className="h-[6px] shrink-0" />
          <div className="h-[266px] shrink-0 bg-[#f0f0f0] border-l border-r border-[#a8acb4] flex flex-col">
            <div className="h-[18px] shrink-0 bg-[#b9bfc9] flex items-center pl-[4px] text-[#44484f]">
              1.4 Plochy
              <span className="flex-1" />
              <Pin size={10} className="text-[#555] mr-[9px]" />
              <X size={12} strokeWidth={1.500} className="text-[#555] mr-[3px]" />
            </div>
            <div className="h-[27px] shrink-0 flex items-center pl-[8px]">
              <T k="tGreen" a />
              <T k="tAdd" />
              <T k="tDown" d />
              <T k="tChart" d />
              <T k="tWave" d />
              <Sep />
              <T k="tLeft" />
              <T k="tRight" />
              <Sep />
              <T k="curlA" a />
              <T k="curlB" a />
              <T k="cycle" />
              <Sep />
              <T k="plus" />
              <T k="cross" />
              <T k="dots" />
              <Sep />
              <T k="tX" />
              <Sep />
              <T k="delRow" />
              <T k="moveL" />
              <T k="moveR" />
              <Sep />
              <T k="yTable" />
              <T k="bTable" />
              <Sep />
              <T k="pencilT" />
              <Sep />
              <T k="handT" />
              <T k="loop" />
              <T k="xl" />
              <T k="calc" />
              <Sep />
              <T k="abW" />
              <T k="fx" />
              <T k="fxX" />
            </div>
            <div className="h-[162px] shrink-0 ml-[2px] w-[901px] border-t-2 border-l-2 border-r-2 border-[#6c6c6c] pt-[1px] flex text-[13.300px] leading-none">
              <div className="w-[881px] h-[151px] shrink-0 grid grid-cols-[53px_107px_122px_194px_64px_93px_79px_86px_83px] grid-rows-[17px_19px_20px_19px_19px_19px_19px_19px]">
                <div className="row-span-3 border-r border-b border-[#a0a0a0] bg-[#ececec] flex flex-col items-center pt-[17px] leading-[16px]">
                  <span>Plocha</span>
                  <span>č.</span>
                </div>
                <div className="bg-[#0078d7] text-white flex items-center justify-center border-b border-[#a0a0a0]">A</div>
                <div className={letter}>B</div>
                <div className={letter}>C</div>
                <div className={letter}>D</div>
                <div className={letter}>E</div>
                <div className={letter}>F</div>
                <div className={letter}>G</div>
                <div className={letter}>H</div>

                <div className={`${sub} col-span-2`}>Typ plochy</div>
                <div className={sub} />
                <div className={sub}>Materiál</div>
                <div className={`${sub} col-span-2`}>Tloušťka</div>
                <div className={sub}>Excentricita</div>
                <div className="bg-[#f0f0f0] flex items-center justify-end overflow-hidden pr-[1px] pb-[2px]">In</div>

                <div className={head}>Geometrie</div>
                <div className={head}>Tuhost</div>
                <div className={head}>Hraniční linie č.</div>
                <div className={head}>č.</div>
                <div className={head}>Typ</div>
                <div className={head}>d [mm]</div>
                <div className={head}>
                  e<span className="text-[10px] ml-[3px] mr-[3px] mt-[3px]">z</span>[mm]
                </div>
                <div className="border-b border-[#a0a0a0] bg-[#f0f0f0] flex items-center justify-center pb-[2px]">Uzly č.</div>

                <DataRow n={1} a lines="1-4" d="250.0" ez="0.0" />
                <DataRow n={2} lines="3,6-8" d="200.0" ez="0.0" />
                <EmptyRow n={3} />
                <EmptyRow n={4} />
                <EmptyRow n={5} />
              </div>
              <div className="w-[16px] ml-[1px] shrink-0 flex flex-col bg-[#c8c8c8]">
                <div className="h-[18px] bg-[#f0f0f0] flex items-center justify-center">
                  <ChevronUp size={12} strokeWidth={2.500} className="text-[#555]" />
                </div>
                <div className="flex-1" />
                <div className="h-[18px] bg-[#f0f0f0] flex items-center justify-center">
                  <ChevronDown size={12} strokeWidth={2.500} className="text-[#555]" />
                </div>
              </div>
            </div>
            <div className="h-[16px] shrink-0 ml-[2px] w-[901px] border-x-2 border-[#6c6c6c] flex items-center bg-[#f0f0f0]">
              <span className="w-[16px] flex justify-center">
                <ChevronLeft size={12} strokeWidth={2.500} className="text-[#555]" />
              </span>
              <span className="w-[565px] h-full bg-[#cdcdcd]" />
              <span className="flex-1" />
              <span className="w-[16px] flex justify-center">
                <ChevronRight size={12} strokeWidth={2.500} className="text-[#555]" />
              </span>
            </div>
            <div className="h-[6px] shrink-0 ml-[2px] w-[901px] border-x-2 border-b-2 border-[#6c6c6c]" />
            <div className="h-[18px] shrink-0 ml-[2px] w-[901px] flex items-end">
              {sheets.map(([t, w]) => (
                <span
                  key={t}
                  className={`${w} shrink-0 tracking-[-0.3px] flex items-center justify-center whitespace-nowrap ${
                    t === 'Plochy' ? 'h-[18px] bg-white border-x border-b-2 border-[#7a7a7a]' : 'h-[17px] border-r border-b-2 border-[#8a8a8a]'
                  }`}
                >
                  {t}
                </span>
              ))}
              <span className="flex-1 h-[17px] flex items-center justify-end">
                <span className="w-[14px] h-[16px] ml-[1px] border border-[#c0c0c0] flex items-center justify-center text-[10px] text-[#aaa]">|◂</span>
                <span className="w-[15px] h-[16px] ml-[1px] border border-[#c0c0c0] flex items-center justify-center text-[10px] text-[#aaa]">◂</span>
                <span className="w-[15px] h-[16px] ml-[1px] border border-[#c0c0c0] flex items-center justify-center text-[10px] text-black">▸</span>
                <span className="w-[14px] h-[16px] ml-[1px] border border-[#c0c0c0] flex items-center justify-center text-[10px] text-black">▸|</span>
              </span>
            </div>
          </div>
        </div>

        {/* right panel */}
        <div className="ml-[3px] w-[213px] shrink-0 flex flex-col">
          <div className="h-[896px] mt-[1px] border border-[#a8acb4] bg-[#b9bfc9] flex flex-col">
            <div className="h-[19px] shrink-0 flex items-center pl-[3px] pb-[2px] text-[#44484f]">
              Panel
              <span className="flex-1" />
              <Pin size={10} className="text-[#555] mr-[9px]" />
              <X size={12} strokeWidth={1.500} className="text-[#555] mr-[3px]" />
            </div>
            <div className="flex-1 ml-[3px] mr-[2px] bg-[#f0f0f0] flex flex-col border-b border-[#808080]">
              <div className="h-[842px] bg-white">
                <div className="h-[24px] mx-[1px] pt-[6px] pl-[1px] border-b border-[#c8c8c8] text-[#222]">Uživatelské viditelnosti</div>
                <div className="pl-[9px] pt-[1px]">
                  <div className="h-[18px] flex items-center">
                    <span className="w-[14px] h-[14px] bg-[#ff0000] border border-[#c8c8c8]" />
                    <span className="ml-[5px] tracking-[-0.2px]">Plochy dle tloušťky - 200 mm</span>
                  </div>
                  <div className="h-[18px] flex items-center">
                    <span className="w-[14px] h-[14px] bg-[#8f8fff] border border-[#c8c8c8]" />
                    <span className="ml-[5px] tracking-[-0.2px]">Plochy dle tloušťky - 250 mm</span>
                  </div>
                </div>
              </div>
              <div className="pl-[3px] pt-[5px]">
                <span className="w-[24px] h-[21px] flex items-center justify-center border border-[#a8a8a8] bg-[#e0e0e0]">
                  <Ico k="clip" size={17} />
                </span>
              </div>
            </div>
          </div>
          <div className="ml-[4px] w-[20px] h-[20px] rounded-b-[3px] bg-white flex items-center justify-center border-x border-b border-[#e8e8e8]">
            <Ico k="bars" size={15} />
          </div>
        </div>
      </div>

      {/* status bar */}
      <div className="flex-1 border-t border-[#a0a4ac] bg-gradient-to-b from-[#b8bcc6] via-[#d0d3da] to-[#aeb2bc] flex items-center pl-[5px] text-[#222]">
        <span className="w-[606px] shrink-0">Hotovo</span>
        {[
          ['UCHOP', 'w-[46px]'],
          ['RASTR', 'w-[42px]'],
          ['KARTEZ', 'w-[50px]'],
          ['OUCHOP', 'w-[55px]'],
          ['VLINIE', 'w-[40px]'],
          ['DXF', 'w-[27px]'],
        ].map(([t, w]) => (
          <span key={t} className={`${w} h-[18px] mr-[1px] shrink-0 flex items-center pl-[1px] text-[11.500px] tracking-[-0.2px] text-[#3c4454] border-t border-l border-[#222] border-r border-b border-r-white border-b-white`}>
            {t}
          </span>
        ))}
        <span className="ml-[190px] h-[18px] w-[89px] border-l border-[#a0a0a0]" />
        <span className="h-[18px] w-[73px] border-l border-[#a0a0a0]" />
        <span className="h-[18px] w-[74px] border-l border-[#a0a0a0]" />
        <span className="h-[18px] border-l border-[#a0a0a0]" />
      </div>
    </div>
  );
}
